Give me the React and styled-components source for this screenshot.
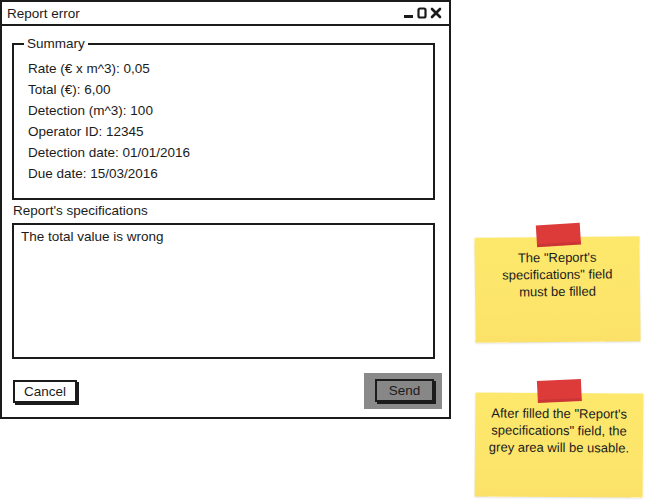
import React from "react";
import styled, { createGlobalStyle } from "styled-components";

const summary = [
  "Rate (€ x m^3): 0,05",
  "Total (€): 6,00",
  "Detection (m^3): 100",
  "Operator ID: 12345",
  "Detection date: 01/01/2016",
  "Due date: 15/03/2016",
];

const notes = [
  {
    text: ['The "Report\'s', 'specifications" field', "must be filled"],
    top: 237,
    height: 105,
    width: 165,
    tilt: -0.6,
  },
  {
    text: ['After filled the "Report\'s', 'specifications" field, the', "grey area will be usable."],
    top: 51,
    height: 104,
    width: 168,
    tilt: 0.4,
  },
];

const WindowControls = () => (
  <svg width="42" height="14" viewBox="0 0 42 14">
    <rect x="1" y="9" width="9" height="3" fill="#1b1b1b" />
    <rect x="15.5" y="2.5" width="7" height="9" rx="1.5" fill="none" stroke="#1b1b1b" strokeWidth="2.2" />
    <path d="M29 3 L37 11 M37 3 L29 11" stroke="#1b1b1b" strokeWidth="2.6" strokeLinecap="round" />
  </svg>
);

const App = () => {
  return (
    <>
      <GlobalStyle />
      <Page>
        <Window>
          <TitleBar>
            <span>Report error</span>
            <WindowControls />
          </TitleBar>
          <Body>
            <Summary>
              <legend>Summary</legend>
              {summary.map((line) => (
                <Line key={line}>{line}</Line>
              ))}
            </Summary>
            <Label>Report's specifications</Label>
            <TextArea>The total value is wrong</TextArea>
            <Actions>
              <Button>Cancel</Button>
              <Disabled>
                <Button $grey>Send</Button>
              </Disabled>
            </Actions>
          </Body>
        </Window>
        <Notes>
          {notes.map(({ text, top, height, width, tilt }) => (
            <Note
              key={text[0]}
              style={{ marginTop: top, height, width, transform: `rotate(${tilt}deg)` }}
            >
              <Tape />
              {text.map((t) => (
                <div key={t}>{t}</div>
              ))}
            </Note>
          ))}
        </Notes>
      </Page>
    </>
  );
};

const GlobalStyle = createGlobalStyle`
  body {
    margin: 0;
    background: #ffffff;
    font-family: "Liberation Sans", Arial, sans-serif;
    color: #1b1b1b;
  }
`;

const Page = styled.div`
  display: flex;
  align-items: flex-start;
  width: 646px;
  height: 501px;
  overflow: hidden;
`;

const Window = styled.div`
  width: 451px;
  height: 419px;
  box-sizing: border-box;
  border: 2px solid #1b1b1b;
  display: flex;
  flex-direction: column;
  background: #fff;
`;

const TitleBar = styled.div`
  height: 22px;
  flex-shrink: 0;
  border-bottom: 2px solid #1b1b1b;
  display: flex;
  align-items: center;
  justify-content: space-between;
  padding: 0 4px 0 5px;
  font-size: 13.5px;

  svg {
    display: block;
  }
`;

const Body = styled.div`
  display: flex;
  flex-direction: column;
  padding: 10px 14px 8px 10px;
`;

const Summary = styled.fieldset`
  margin: 0;
  border: 2px solid #1b1b1b;
  padding: 6px 14px 14px 14px;
  min-width: 0;

  legend {
    font-size: 13.5px;
    line-height: 16px;
    padding: 0 3px;
    margin-left: -4px;
  }
`;

const Line = styled.div`
  font-size: 13.5px;
  line-height: 21px;
`;

const Label = styled.div`
  font-size: 13.5px;
  line-height: 16px;
  margin: 3px 0 4px 1px;
`;

const TextArea = styled.div`
  height: 136px;
  box-sizing: border-box;
  border: 2px solid #1b1b1b;
  padding: 4px 7px;
  font-size: 13.5px;
  line-height: 16px;
`;

const Actions = styled.div`
  display: flex;
  align-items: center;
  justify-content: space-between;
  margin-top: 14px;
  padding-left: 1px;
`;

const Disabled = styled.div`
  background: #8a8a8a;
  padding: 6px 8px 7px 11px;
  margin-right: -7px;
`;

const Button = styled.div`
  box-sizing: border-box;
  height: 23px;
  min-width: ${(p) => (p.$grey ? "59px" : "64px")};
  border: 2px solid #1b1b1b;
  box-shadow: 2px 2px 0 #1b1b1b;
  background: ${(p) => (p.$grey ? "#878787" : "#fff")};
  font-size: 13.5px;
  line-height: 19px;
  text-align: center;
  padding: 0 8px;
`;

const Notes = styled.div`
  display: flex;
  flex-direction: column;
  margin-left: 24px;
`;

const Note = styled.div`
  position: relative;
  box-sizing: border-box;
  background: linear-gradient(180deg, #fde86c 0%, #fce56a 70%, #fbe168 100%);
  box-shadow: 0 1px 2px rgba(0, 0, 0, 0.12);
  padding-top: 12px;
  font-size: 13px;
  line-height: 17px;
  text-align: center;
  color: #1b1b1b;
`;

const Tape = styled.div`
  position: absolute;
  left: 62px;
  top: -13px;
  width: 44px;
  height: 22px;
  background: #dd3a3a;
  transform: rotate(-3deg);
  box-shadow: inset 0 -3px 0 rgba(0, 0, 0, 0.08);
`;

export default App;
